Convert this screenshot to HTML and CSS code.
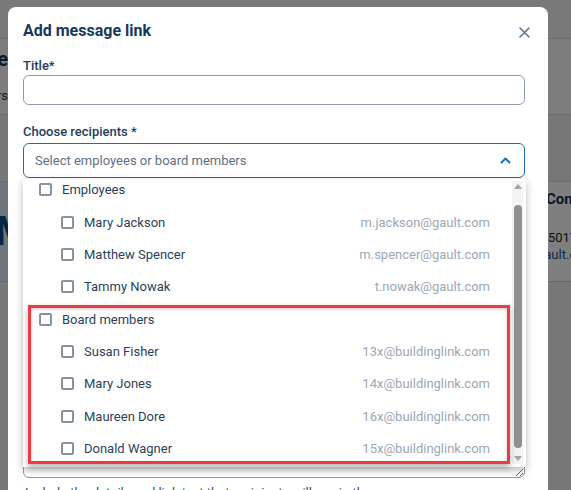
FILE: index.html
```html
<!DOCTYPE html>
<html lang="en">
<head>
<meta charset="utf-8">
<title>Add message link</title>
<link rel="stylesheet" href="styles.css">
</head>
<body>
  <div class="page">
    <div class="page-bar"></div>
    <div class="page-head">
      <div class="edge-left">
        <span class="head-title">Welcome home</span>
        <span class="head-sub">Owners</span>
      </div>
    </div>
    <div class="page-cards">
      <div class="stat-card"><span class="stat-num">M</span></div>
      <div class="page-mid"></div>
      <div class="contact-card">
        <strong class="contact-title">Contact</strong>
        <span class="contact-phone">7-5017</span>
        <span class="contact-mail">gault.com</span>
      </div>
    </div>
  </div>

  <div class="backdrop"></div>

  <div class="modal" role="dialog" aria-labelledby="modal-title">
    <div class="modal-head">
      <h2 id="modal-title" class="modal-title">Add message link</h2>
      <button class="close-btn" aria-label="Close">
        <svg width="11" height="11" viewBox="0 0 11 11"><path d="M1 1L10 10M10 1L1 10" stroke="#5b7593" stroke-width="1.6" stroke-linecap="round"/></svg>
      </button>
    </div>

    <label class="field-label" for="title">Title*</label>
    <input class="text-input" id="title" type="text">

    <label class="field-label label-gap">Choose recipients *</label>
    <div class="select">
      <div class="select-box">
        <span class="select-placeholder">Select employees or board members</span>
        <svg class="chevron" width="11" height="7" viewBox="0 0 11 7"><path d="M1.5 5.5L5.5 1.5L9.5 5.5" fill="none" stroke="#1c6db5" stroke-width="2" stroke-linecap="round" stroke-linejoin="round"/></svg>
      </div>

      <div class="dropdown">
        <div class="list-viewport">
          <ul class="options">
            <li class="option group"><span class="check"></span><span class="opt-name">Employees</span></li>
            <li class="option"><span class="check"></span><span class="opt-name">Mary Jackson</span><span class="opt-mail">m.jackson@gault.com</span></li>
            <li class="option"><span class="check"></span><span class="opt-name">Matthew Spencer</span><span class="opt-mail">m.spencer@gault.com</span></li>
            <li class="option"><span class="check"></span><span class="opt-name">Tammy Nowak</span><span class="opt-mail">t.nowak@gault.com</span></li>
            <li class="option group"><span class="check"></span><span class="opt-name">Board members</span></li>
            <li class="option"><span class="check"></span><span class="opt-name">Susan Fisher</span><span class="opt-mail">13x@buildinglink.com</span></li>
            <li class="option"><span class="check"></span><span class="opt-name">Mary Jones</span><span class="opt-mail">14x@buildinglink.com</span></li>
            <li class="option"><span class="check"></span><span class="opt-name">Maureen Dore</span><span class="opt-mail">16x@buildinglink.com</span></li>
            <li class="option"><span class="check"></span><span class="opt-name">Donald Wagner</span><span class="opt-mail">15x@buildinglink.com</span></li>
          </ul>
        </div>
        <div class="scrollbar">
          <span class="arrow up"></span>
          <span class="thumb"></span>
          <span class="arrow down"></span>
        </div>
        <div class="highlight"></div>
      </div>
    </div>

    <label class="field-label label-gap" for="message">Message*</label>
    <textarea class="text-area" id="message"></textarea>
    <p class="hint">Include the details and link text that recipients will see in the message.</p>
  </div>
</body>
</html>
```

FILE: styles.css
```css
* { box-sizing: border-box; }

html, body {
  margin: 0;
  width: 571px;
  height: 490px;
  overflow: hidden;
}

body {
  position: relative;
  font-family: Roboto, "Liberation Sans", sans-serif;
  background: #eeeeee;
}

/* underlying page */
.page {
  display: flex;
  flex-direction: column;
}

.page-bar {
  height: 39px;
  border-bottom: 1px solid #d8d8d8;
  background: #f3f3f3;
}

.page-head {
  height: 76px;
  border-bottom: 1px solid #d6d6d6;
  background: #fafafa;
}

.edge-left {
  width: 8px;
  overflow: hidden;
  display: flex;
  flex-direction: column;
  align-items: flex-end;
  padding-top: 8px;
}

.head-title {
  font-size: 20px;
  font-weight: 700;
  color: #14325a;
  white-space: nowrap;
  line-height: 24px;
}

.head-sub {
  margin-top: 17px;
  font-size: 13px;
  color: #333;
  white-space: nowrap;
}

.page-cards {
  margin-top: 66px;
  height: 101px;
  display: grid;
  grid-template-columns: 8px 1fr 31px;
  border-top: 1px solid #dcdcdc;
  border-bottom: 1px solid #d2d2d2;
  background: #ffffff;
}

.stat-card {
  background: #dbe9f7;
  overflow: hidden;
  display: flex;
  justify-content: flex-end;
  align-items: center;
}

.stat-num {
  font-size: 40px;
  font-weight: 700;
  color: #0f4c8a;
  margin-right: -22px;
}

.contact-card {
  overflow: hidden;
  display: flex;
  flex-direction: column;
  padding: 8px 0 0 6px;
  white-space: nowrap;
}

.contact-title {
  font-size: 15px;
  color: #102a4a;
  line-height: 18px;
}

.contact-phone {
  margin-top: 21px;
  margin-left: -9px;
  font-size: 13px;
  color: #1a1a1a;
  line-height: 17px;
}

.contact-mail {
  margin-left: -9px;
  font-size: 13px;
  color: #13509c;
  line-height: 17px;
}

.backdrop {
  position: absolute;
  inset: 0;
  background: rgba(0, 0, 0, 0.5);
}

/* dialog */
.modal {
  position: absolute;
  left: 8px;
  top: 7px;
  width: 540px;
  height: 520px;
  background: #fff;
  border-radius: 8px;
  padding: 14px 23px 0 15px;
  display: flex;
  flex-direction: column;
}

.modal-head {
  display: flex;
  align-items: center;
  justify-content: space-between;
  height: 20px;
}

.modal-title {
  margin: 0;
  font-size: 16px;
  font-weight: 700;
  color: #17375e;
  line-height: 20px;
}

.close-btn {
  border: 0;
  background: none;
  padding: 0;
  margin-right: -5px;
  margin-top: 2px;
  width: 11px;
  height: 11px;
  display: flex;
}

.field-label {
  display: block;
  margin-top: 17px;
  font-size: 13px;
  font-weight: 500;
  color: #253c5a;
  line-height: 16px;
}

.label-gap { margin-top: 19px; }

.text-input {
  margin-top: 1px;
  height: 30px;
  width: 100%;
  border: 1px solid #8e9aab;
  border-radius: 6px;
  font: inherit;
  outline: none;
}

.select {
  position: relative;
  margin-top: 3px;
  z-index: 2;
}

.select-box {
  height: 35px;
  border: 1px solid #1d6fb8;
  border-radius: 6px;
  display: flex;
  align-items: center;
  justify-content: space-between;
  padding: 0 13px 0 11px;
}

.select-placeholder {
  font-size: 13px;
  color: #5f6f84;
}

.dropdown {
  position: absolute;
  top: calc(100% + 1px);
  left: 0;
  right: -1px;
  height: 288px;
  background: #fff;
  box-shadow: 0 3px 8px rgba(0, 0, 0, 0.28);
  display: flex;
}

.list-viewport {
  flex: 1;
  overflow: hidden;
}

.options {
  list-style: none;
  margin: -5.5px 0 0;
  padding: 0;
}

.option {
  height: 32.375px;
  display: flex;
  align-items: center;
  padding: 0 22px 0 38px;
  font-size: 13px;
  color: #2b3f5c;
}

.option.group { padding-left: 16px; }

.check {
  width: 13px;
  height: 13px;
  border: 2px solid #8593a5;
  border-radius: 2px;
  flex: none;
  margin-right: 10px;
}

.opt-name { flex: 1; }

.opt-mail { color: #9ba7b6; }

.scrollbar {
  width: 11px;
  margin: 2px 3px 3px 0;
  background: #f3f3f3;
  display: flex;
  flex-direction: column;
  align-items: center;
  padding: 3px 0;
}

.arrow {
  width: 0;
  height: 0;
  border-left: 4px solid transparent;
  border-right: 4px solid transparent;
}

.arrow.up { border-bottom: 5px solid #a3a3a3; }
.arrow.down { border-top: 5px solid #a3a3a3; }

.thumb {
  width: 8px;
  flex: 1;
  margin: 16px 0 8px;
  background: #909090;
  border-radius: 4px;
}

/* marks the board member group */
.highlight {
  position: absolute;
  left: 5px;
  top: 126px;
  width: 482px;
  height: 159px;
  border: 3px solid #ee3b43;
  box-shadow: 0 3px 6px rgba(0, 0, 0, 0.3), inset 0 1px 3px rgba(0, 0, 0, 0.25);
  pointer-events: none;
}

.text-area {
  margin-top: 2px;
  height: 263px;
  width: 100%;
  border: 1px solid #8e9aab;
  border-radius: 6px;
  resize: vertical;
  font: inherit;
  outline: none;
}

.hint {
  margin: 7px 0 0 2px;
  font-size: 13px;
  line-height: 16px;
  color: #3b4a5e;
  white-space: nowrap;
}
```
